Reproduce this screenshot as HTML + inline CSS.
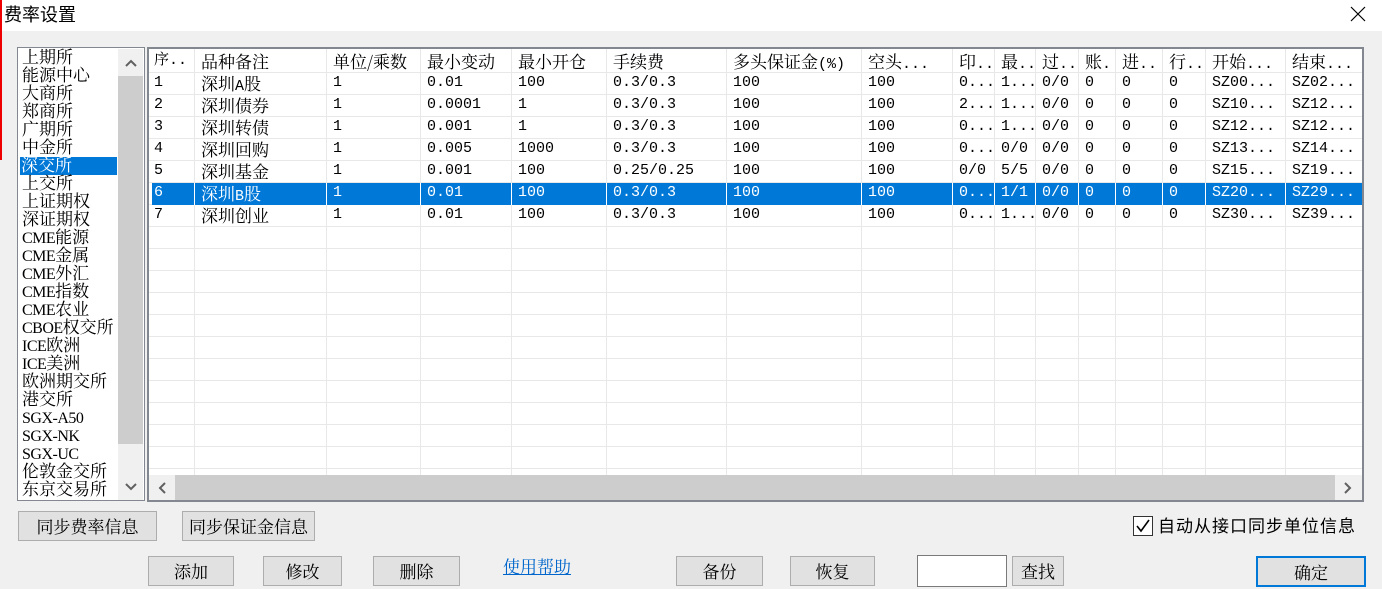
<!DOCTYPE html>
<html><head><meta charset="utf-8"><style>
*{margin:0;padding:0;box-sizing:border-box}
body{width:1382px;height:589px;background:#f0f0f0;position:relative;overflow:hidden;font-family:"Liberation Serif","Noto Serif CJK SC",serif;color:#000}
.a{position:absolute}
#title{left:0;top:0;width:1382px;height:31px;background:#fff}
#list{left:17px;top:47px;width:128px;height:454px;background:#fff;border:1px solid #828790;overflow:hidden}
.li{position:absolute;left:3px;height:18px;line-height:18px;font-size:17px;white-space:nowrap;padding-left:1px}
.li b{font-weight:normal;font-size:16px;letter-spacing:-0.5px}
.li.sel{background:#0078d7;color:#fff;width:97px;left:2px}
#vs{left:100px;top:1px;width:25px;height:451px;background:#f0f0f0}
#grid{left:147px;top:47px;width:1217px;height:455px;background:#fff;border:2px solid #828790;border-right-width:2px}
.c{position:absolute;height:22px;line-height:22px;font-size:15px;white-space:nowrap;overflow:hidden;font-family:"Liberation Mono","Noto Serif CJK SC",monospace}
.c span{font-family:"Noto Serif CJK SC",serif;font-size:17px}
.btn{position:absolute;background:#e1e1e1;border:1px solid #adadad;font-size:17px;text-align:center;font-family:"Noto Serif CJK SC",serif}
</style></head><body>
<div class="a" id="title"></div>
<div class="a" style="left:0;top:0;width:2px;height:160px;background:#e00"></div>
<div class="a" style="left:4px;top:0;height:28px;line-height:28px;font-size:18px;font-family:'Noto Sans CJK SC',sans-serif">费率设置</div>
<svg class="a" style="left:1350px;top:6px" width="16" height="16"><path d="M1 1L15 15M15 1L1 15" stroke="#000" stroke-width="1.2"/></svg>

<div class="a" id="list">
<div class="li" style="top:1px">上期所</div>
<div class="li" style="top:19px">能源中心</div>
<div class="li" style="top:37px">大商所</div>
<div class="li" style="top:55px">郑商所</div>
<div class="li" style="top:73px">广期所</div>
<div class="li" style="top:91px">中金所</div>
<div class="li sel" style="top:109px">深交所</div>
<div class="li" style="top:127px">上交所</div>
<div class="li" style="top:145px">上证期权</div>
<div class="li" style="top:163px">深证期权</div>
<div class="li" style="top:181px"><b>CME</b>能源</div>
<div class="li" style="top:199px"><b>CME</b>金属</div>
<div class="li" style="top:217px"><b>CME</b>外汇</div>
<div class="li" style="top:235px"><b>CME</b>指数</div>
<div class="li" style="top:253px"><b>CME</b>农业</div>
<div class="li" style="top:271px"><b>CBOE</b>权交所</div>
<div class="li" style="top:289px"><b>ICE</b>欧洲</div>
<div class="li" style="top:307px"><b>ICE</b>美洲</div>
<div class="li" style="top:325px">欧洲期交所</div>
<div class="li" style="top:343px">港交所</div>
<div class="li" style="top:361px"><b>SGX-A50</b></div>
<div class="li" style="top:379px"><b>SGX-NK</b></div>
<div class="li" style="top:397px"><b>SGX-UC</b></div>
<div class="li" style="top:415px">伦敦金交所</div>
<div class="li" style="top:433px">东京交易所</div>
<div class="a" id="vs">
 <div class="a" style="left:0;top:27px;width:25px;height:368px;background:#cdcdcd"></div>
 <svg class="a" style="left:7px;top:10px" width="12" height="8"><path d="M1 7L6 2L11 7" fill="none" stroke="#606060" stroke-width="2"/></svg>
 <svg class="a" style="left:7px;top:434px" width="12" height="8"><path d="M1 1L6 6L11 1" fill="none" stroke="#606060" stroke-width="2"/></svg>
</div>
</div>

<div class="a" id="grid">
<svg class="a" style="left:0;top:0" width="1213" height="426">
<g stroke="#e8e8e8" stroke-width="1">
<line x1="0" y1="23.5" x2="1213" y2="23.5"/><line x1="0" y1="45.5" x2="1213" y2="45.5"/><line x1="0" y1="67.5" x2="1213" y2="67.5"/><line x1="0" y1="89.5" x2="1213" y2="89.5"/><line x1="0" y1="111.5" x2="1213" y2="111.5"/><line x1="0" y1="133.5" x2="1213" y2="133.5"/><line x1="0" y1="155.5" x2="1213" y2="155.5"/><line x1="0" y1="177.5" x2="1213" y2="177.5"/><line x1="0" y1="199.5" x2="1213" y2="199.5"/><line x1="0" y1="221.5" x2="1213" y2="221.5"/><line x1="0" y1="243.5" x2="1213" y2="243.5"/><line x1="0" y1="265.5" x2="1213" y2="265.5"/><line x1="0" y1="287.5" x2="1213" y2="287.5"/><line x1="0" y1="309.5" x2="1213" y2="309.5"/><line x1="0" y1="331.5" x2="1213" y2="331.5"/><line x1="0" y1="353.5" x2="1213" y2="353.5"/><line x1="0" y1="375.5" x2="1213" y2="375.5"/><line x1="0" y1="397.5" x2="1213" y2="397.5"/><line x1="0" y1="419.5" x2="1213" y2="419.5"/>
<line x1="45.5" y1="0" x2="45.5" y2="426"/><line x1="177.5" y1="0" x2="177.5" y2="426"/><line x1="271.5" y1="0" x2="271.5" y2="426"/><line x1="362.5" y1="0" x2="362.5" y2="426"/><line x1="457.5" y1="0" x2="457.5" y2="426"/><line x1="577.5" y1="0" x2="577.5" y2="426"/><line x1="712.5" y1="0" x2="712.5" y2="426"/><line x1="803.5" y1="0" x2="803.5" y2="426"/><line x1="845.5" y1="0" x2="845.5" y2="426"/><line x1="886.5" y1="0" x2="886.5" y2="426"/><line x1="929.5" y1="0" x2="929.5" y2="426"/><line x1="966.5" y1="0" x2="966.5" y2="426"/><line x1="1013.5" y1="0" x2="1013.5" y2="426"/><line x1="1056.5" y1="0" x2="1056.5" y2="426"/><line x1="1136.5" y1="0" x2="1136.5" y2="426"/>
</g>
<rect x="3" y="134" width="1210" height="22" fill="#0078d7"/>
<g stroke="#fff"><line x1="45.5" y1="134" x2="45.5" y2="156"/><line x1="177.5" y1="134" x2="177.5" y2="156"/><line x1="271.5" y1="134" x2="271.5" y2="156"/><line x1="362.5" y1="134" x2="362.5" y2="156"/><line x1="457.5" y1="134" x2="457.5" y2="156"/><line x1="577.5" y1="134" x2="577.5" y2="156"/><line x1="712.5" y1="134" x2="712.5" y2="156"/><line x1="803.5" y1="134" x2="803.5" y2="156"/><line x1="845.5" y1="134" x2="845.5" y2="156"/><line x1="886.5" y1="134" x2="886.5" y2="156"/><line x1="929.5" y1="134" x2="929.5" y2="156"/><line x1="966.5" y1="134" x2="966.5" y2="156"/><line x1="1013.5" y1="134" x2="1013.5" y2="156"/><line x1="1056.5" y1="134" x2="1056.5" y2="156"/><line x1="1136.5" y1="134" x2="1136.5" y2="156"/></g>
</svg>
<div id="rows"></div>
<div class="a" style="left:0;top:426px;width:1213px;height:25px;background:#f0f0f0">
 <div class="a" style="left:26px;top:0;width:1160px;height:25px;background:#cdcdcd"></div>
 <svg class="a" style="left:9px;top:7px" width="8" height="12"><path d="M7 1L2 6L7 11" fill="none" stroke="#606060" stroke-width="2"/></svg>
 <svg class="a" style="left:1195px;top:7px" width="8" height="12"><path d="M1 1L6 6L1 11" fill="none" stroke="#606060" stroke-width="2"/></svg>
</div>
</div>

<div class="btn" style="left:18px;top:511px;width:139px;height:30px;line-height:28px">同步费率信息</div>
<div class="btn" style="left:182px;top:511px;width:133px;height:30px;line-height:28px">同步保证金信息</div>
<div class="btn" style="left:148px;top:556px;width:86px;height:30px;line-height:28px">添加</div>
<div class="btn" style="left:263px;top:556px;width:79px;height:30px;line-height:28px">修改</div>
<div class="btn" style="left:373px;top:556px;width:87px;height:30px;line-height:28px">删除</div>
<div class="a" style="left:503px;top:553px;font-size:17px;color:#0066cc;text-decoration:underline;font-family:'Noto Serif CJK SC',serif">使用帮助</div>
<div class="btn" style="left:676px;top:556px;width:87px;height:30px;line-height:28px">备份</div>
<div class="btn" style="left:790px;top:556px;width:85px;height:30px;line-height:28px">恢复</div>
<div class="a" style="left:917px;top:555px;width:90px;height:32px;background:#fff;border:1px solid #7a7a7a"></div>
<div class="btn" style="left:1012px;top:556px;width:52px;height:30px;line-height:28px">查找</div>
<div class="btn" style="left:1256px;top:556px;width:110px;height:31px;line-height:27px;border:2px solid #0078d7">确定</div>
<div class="a" style="left:1133px;top:516px;width:20px;height:20px;border:1px solid #333;background:#fff"></div>
<svg class="a" style="left:1135px;top:518px" width="16" height="16"><path d="M2 8L6 13L14 2" fill="none" stroke="#000" stroke-width="1.6"/></svg>
<div class="a" style="left:1158px;top:513px;font-size:17px;line-height:24px;letter-spacing:1px;font-family:'Noto Sans CJK SC',sans-serif">自动从接口同步单位信息</div>

<script>
var xs=[5,52,184,278,369,464,584,719,810,852,893,936,973,1020,1063,1143];
var data=[
["序..","<span>品种备注</span>","<span>单位/乘数</span>","<span>最小变动</span>","<span>最小开仓</span>","<span>手续费</span>","<span>多头保证金</span>(%)","<span>空头</span>...","<span>印</span>..","<span>最</span>..","<span>过</span>..","<span>账</span>.","<span>进</span>..","<span>行</span>..","<span>开始</span>...","<span>结束</span>..."],
["1","<span>深圳</span>A<span>股</span>","1","0.01","100","0.3/0.3","100","100","0...","1...","0/0","0","0","0","SZ00...","SZ02..."],
["2","<span>深圳债券</span>","1","0.0001","1","0.3/0.3","100","100","2...","1...","0/0","0","0","0","SZ10...","SZ12..."],
["3","<span>深圳转债</span>","1","0.001","1","0.3/0.3","100","100","0...","1...","0/0","0","0","0","SZ12...","SZ12..."],
["4","<span>深圳回购</span>","1","0.005","1000","0.3/0.3","100","100","0...","0/0","0/0","0","0","0","SZ13...","SZ14..."],
["5","<span>深圳基金</span>","1","0.001","100","0.25/0.25","100","100","0/0","5/5","0/0","0","0","0","SZ15...","SZ19..."],
["6","<span>深圳</span>B<span>股</span>","1","0.01","100","0.3/0.3","100","100","0...","1/1","0/0","0","0","0","SZ20...","SZ29..."],
["7","<span>深圳创业</span>","1","0.01","100","0.3/0.3","100","100","0...","1...","0/0","0","0","0","SZ30...","SZ39..."]];
var h="";
data.forEach(function(r,i){r.forEach(function(t,j){
var w=(j<15?xs[j+1]:1213)-xs[j]-3;
h+='<div class="c" style="left:'+xs[j]+'px;top:'+(i*22+1)+'px;width:'+w+'px;'+(i==6?'color:#fff':'')+'">'+t+'</div>';});});
document.getElementById('rows').innerHTML=h;
</script>
</body></html>
